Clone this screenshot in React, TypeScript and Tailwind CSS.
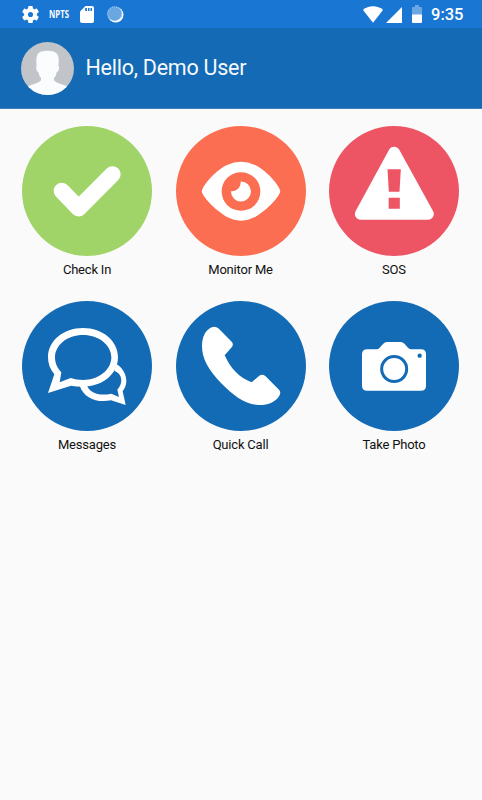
import type { ReactNode } from "react";

type Tile = { label: string; color: string; icon: ReactNode };

const tiles: Tile[] = [
  {
    label: "Check In",
    color: "bg-[#a0d468]",
    icon: (
      <path d="M119.5 194.5 170 247 271.5 145" fill="none" stroke="#fff" strokeWidth="49" strokeLinecap="round" strokeLinejoin="round" />
    ),
  },
  {
    label: "Monitor Me",
    color: "bg-[#fc6e51]",
    icon: (
      <>
        <path
          fill="#fff"
          d="M77.500 196C77.500 183 113 137 153 117Q195 97 237 117C277 137 312.500 183 312.500 196C312.500 209 277 250 237 273Q195 295 153 273C113 250 77.500 209 77.500 196Z"
        />
        <circle cx="195" cy="196.500" r="58" fill="#fc6e51" />
        <path d="M194 166.500A30 30 0 1 1 165 195.500C182 197 195 184 194 166.500Z" fill="#fff" />
      </>
    ),
  },
  {
    label: "SOS",
    color: "bg-[#ed5565]",
    icon: (
      <>
        <path d="M195.500 79 94.500 264H297.500Z" fill="#fff" stroke="#fff" strokeWidth="34" strokeLinejoin="round" />
        <path d="M175.500 130H215.500L211.500 197H179.500ZM179 215H212.500V248H179Z" fill="#ed5565" />
      </>
    ),
  },
  {
    label: "Messages",
    color: "bg-[#146bb5]",
    icon: (
      <>
        <path
          fill="#fff"
          d="M283 189C302 201 313 219 313 241C313 253 308 263 302 271L311 312 267 298C225 306 186 292 173 254H195C204 276 232 286 268 278L291 288 286 266C305 244 301 219 277 209Z"
        />
        <path
          fill="#fff"
          fillRule="evenodd"
          d="M183 81C242 81 288 119 288 169C288 219 242 257 183 257Q162 257 147 254L78 276 97 220C84 204 78 188 78 169C78 119 124 81 183 81ZM183 102C136 102 99 132 99 169C99 188 107 203 118 214L113 244 146 231C157 235 170 237 183 237C230 237 268 207 268 169C268 132 230 102 183 102Z"
        />
      </>
    ),
  },
  {
    label: "Quick Call",
    color: "bg-[#146bb5]",
    icon: (
      <path
        fill="#fff"
        d="M107 79Q118 74 127 82L167 122Q174 130 167 139L146 163C164 203 190 230 227 244L250 224Q259 218 268 225L309 266Q316 273 310 284C299 303 275 313 247 312C209 311 172 284 135 246C98 207 78 174 78 135C78 107 89 87 107 79Z"
      />
    ),
  },
  {
    label: "Take Photo",
    color: "bg-[#146bb5]",
    icon: (
      <>
        <path
          fill="#fff"
          d="M115 145H143Q148 145 152 140L162 129Q167 123 174 123H215Q222 123 227 129L237 140Q242 145 247 145H276Q291 145 291 160V254Q291 269 276 269H115Q99 269 99 254V160Q99 145 115 145Z"
        />
        <circle cx="195.500" cy="204" r="37.500" fill="none" stroke="#146bb5" strokeWidth="9" />
        <circle cx="272" cy="164" r="6.500" fill="#146bb5" />
      </>
    ),
  },
];

function StatusBar() {
  return (
    <div className="flex h-7 items-center justify-between bg-[#1976d2] pl-[22px] pr-[19px] text-white">
      <div className="flex h-full items-center">
        <svg className="h-[17px] w-[17px]" viewBox="2 2 20 20" fill="#fff">
          <path d="M19.430 12.980c.04-.32.07-.64.07-.98s-.03-.66-.07-.98l2.110-1.650c.19-.15.24-.42.12-.64l-2-3.460c-.12-.22-.39-.3-.61-.22l-2.490 1c-.52-.4-1.080-.73-1.690-.98l-.38-2.650A.488.488 0 0 0 14 2h-4c-.25 0-.46.18-.49.42l-.38 2.650c-.61.25-1.170.59-1.690.98l-2.490-1c-.23-.09-.49 0-.61.22l-2 3.460c-.13.22-.07.49.12.64l2.110 1.650c-.04.32-.07.65-.07.98s.03.66.07.98l-2.110 1.650c-.19.15-.24.42-.12.64l2 3.460c.12.22.39.3.61.22l2.490-1c.52.4 1.080.73 1.690.98l.38 2.650c.03.24.24.42.49.42h4c.25 0 .46-.18.49-.42l.38-2.650c.61-.25 1.170-.59 1.690-.98l2.490 1c.23.09.49 0 .61-.22l2-3.460c.12-.22.07-.49-.12-.64l-2.110-1.650zM12 15a3 3 0 1 1 0-6 3 3 0 0 1 0 6z" />
        </svg>
        <div className="ml-[10px] w-[20px]">
          <span className="inline-block origin-left scale-x-[0.74] whitespace-nowrap align-top font-['Open_Sans',sans-serif] text-[10.500px] font-bold leading-7">NPTS</span>
        </div>
        <svg className="ml-[11px] h-[17px] w-[14px]" viewBox="0 0 14 17">
          <path d="M5.500 0H12Q14 0 14 2V15Q14 17 12 17H2Q0 17 0 15V5.500Z" fill="#fff" />
          <path d="M5.200 2H7V5H5.200ZM8 2H9.500V5H8ZM10.500 2H12V5H10.500Z" fill="#1976d2" />
        </svg>
        <svg className="ml-[12.500px] h-[17px] w-[17px]" viewBox="0 0 17 17">
          <circle cx="8.700" cy="8.700" r="7.800" fill="#fff" />
          <circle cx="7.700" cy="7.700" r="7.300" fill="#69a7e3" />
          <circle cx="7.700" cy="7.700" r="7" fill="none" stroke="#b5d5f2" strokeWidth="1" strokeDasharray="1 1" />
        </svg>
      </div>
      <div className="flex h-full items-center">
        <svg className="h-[17px] w-[20px]" viewBox="0 0 20 17" preserveAspectRatio="none">
          <path d="M0 4Q4 .3 10 .3T20 4L10 16.700Z" fill="#fff" />
        </svg>
        <svg className="ml-[3px] mt-px h-[16px] w-[16px]" viewBox="0 0 16 16">
          <path d="M16 0V16H0Z" fill="#fff" />
        </svg>
        <svg className="ml-[10px] h-[18px] w-[10px]" viewBox="0 0 10 18">
          <path d="M3 0H7V2H9Q10 2 10 3V10H0V3Q0 2 1 2H3Z" fill="#69a7e3" />
          <path d="M0 9.500H10V17Q10 18 9 18H1Q0 18 0 17Z" fill="#fff" />
        </svg>
        <span className="ml-[9px] mt-[2px] w-[32px] whitespace-nowrap text-[16.500px] font-medium leading-7">9:35</span>
      </div>
    </div>
  );
}

function Header() {
  return (
    <header className="flex h-[81px] items-center border-b border-[#3f82c0] bg-[#146ab4] pl-[21px]">
      <svg className="h-[53px] w-[53px]" viewBox="0 0 159 159">
        <defs>
          <clipPath id="avatar">
            <circle cx="79.500" cy="79.500" r="79.500" />
          </clipPath>
        </defs>
        <g clipPath="url(#avatar)">
          <rect width="159" height="159" fill="#c1c5ca" />
          <path
            fill="#fbfcfe"
            d="M47 72C44 51 47 36 56 31C66 25 93 25 102 31C113 36 115 51 112 72Q116 73 114 81Q112 90 107 91Q105 105 99 107V115Q103 121 121 127Q132 130 139 134V159H20V134Q26 130 38 127Q55 121 60 115V107Q54 103 52 91Q47 89 46 81Q44 74 47 72Z"
          />
        </g>
      </svg>
      <h1 className="ml-[11.500px] text-[21.500px] leading-7 tracking-[-0.25px] text-[#f5f9fd]">Hello, Demo User</h1>
    </header>
  );
}

export default function App() {
  return (
    <div className="min-h-screen w-full bg-[#fafafa] font-[Roboto,sans-serif]">
      <StatusBar />
      <Header />
      <main className="grid grid-cols-[repeat(3,130px)] gap-x-[23.500px] gap-y-[25px] pl-[22px] pt-[17px]">
        {tiles.map((tile) => (
          <button key={tile.label} className="flex h-[150px] flex-col items-center">
            <span className={`block h-[130px] w-[130px] shrink-0 rounded-full ${tile.color}`}>
              <svg className="h-full w-full" viewBox="0 0 390 390">{tile.icon}</svg>
            </span>
            <span className="mt-[5px] text-[13px] leading-[18px] tracking-[-0.2px] text-[#111]">{tile.label}</span>
          </button>
        ))}
      </main>
    </div>
  );
}
